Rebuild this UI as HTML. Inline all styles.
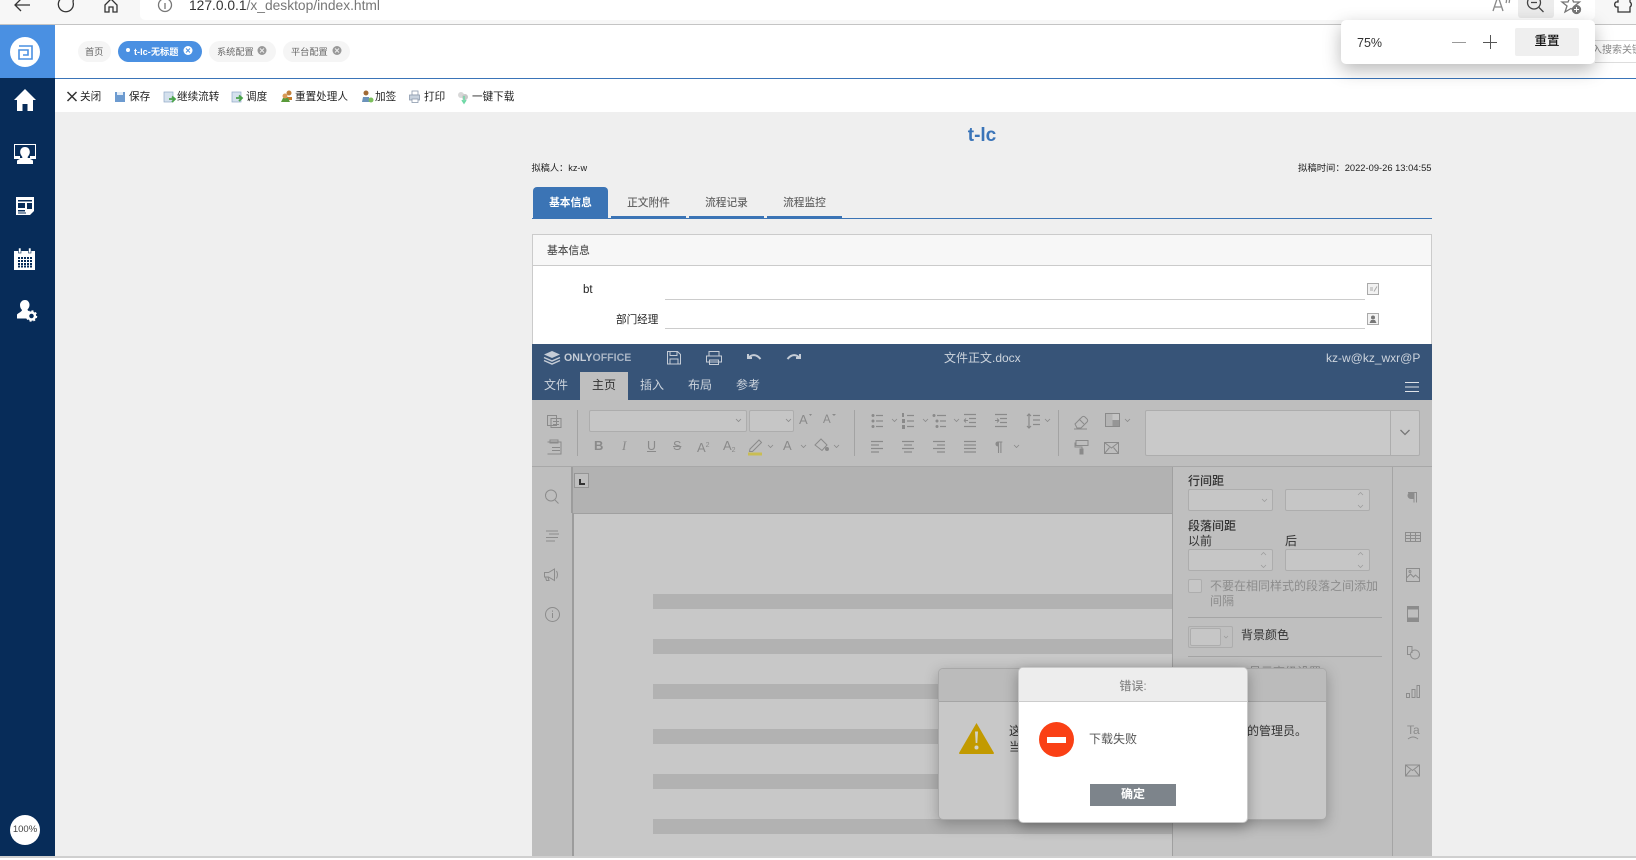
<!DOCTYPE html>
<html lang="zh"><head><meta charset="utf-8"><title>index</title>
<style>
html,body{margin:0;padding:0;width:1636px;height:860px;overflow:hidden;background:#fff}
body{position:relative;font-family:"Liberation Sans","Noto Sans CJK SC",sans-serif;color:#333}
div,span,svg{position:absolute;box-sizing:border-box}
.t{white-space:nowrap;line-height:16px;height:16px}
svg{left:0;top:0;overflow:visible}
.pill{height:21px;top:41px;border-radius:11px;background:#f5f5f5}
.tb{font-size:10.6px;color:#222;top:89px}
.ti{font-size:9.2px;color:#666;top:44px}
.ft{top:187px;height:31px;font-size:10.7px;line-height:33px;text-align:center;color:#666;font-weight:500}
.m{font-size:12px;color:#cdd4dd;top:377px}
.p{font-size:12px;color:#333}
.inp{background:#c6c6c6;border:1px solid #adadad;border-radius:2px}
.ic{font-size:13px;color:#8a8a8a;top:438px}
</style></head><body>

<!-- browser chrome -->
<div style="left:0;top:0;width:1636px;height:25px;background:#f7f7f7;border-bottom:1px solid #c4c4c4"></div>
<div style="left:140px;top:0;width:1455px;height:20px;background:#fff;border-radius:0 0 5px 5px"></div>
<div style="left:1518px;top:0;width:36px;height:18px;background:#ececec;border-radius:0 0 3px 3px"></div>
<div class="t" style="left:189px;top:-2px;font-size:13.8px;color:#777"><span style="position:static;color:#333">127.0.0.1</span>/x_desktop/index.html</div>
<svg width="1636" height="25" fill="none" stroke="#333" stroke-width="1.3">
<path d="M30 5H15M21 -1L15 5l6 6"/>
<path d="M73 2a7.5 7.5 0 1 1-3-4M70 -3l3.500 1-.5 4"/>
<path d="M105 5l6-6 6 6v7h-4V7h-4v5h-4z"/>
<circle cx="165" cy="5" r="6.500" stroke="#777"/><path d="M165 3v6" stroke="#777"/>
<circle cx="1534" cy="2.500" r="6.500" stroke="#444"/><path d="M1531 2.500h6M1539 7.500l4.500 4.500" stroke="#444"/>
<path d="M1571 -5l2.500 7h6l-5 4 2 6-5.500-3.500-6 3.500 2-6-5-4h6z" stroke="#777"/>
<circle cx="1576.500" cy="9.500" r="4" fill="#777" stroke="#777"/><path d="M1574 9.500h5M1576.500 7v5" stroke="#fff" stroke-width="1"/>
<path d="M1493 11l5-15 5 15M1495 7h6M1506 3q1-2 0-6M1509 3q1-3 0-7" stroke="#888"/>
<path d="M1618 -3v5h-2a3 3 0 0 0 0 5h2v5h12V7a3 3 0 0 0 0-5V-3z" stroke="#333"/>
</svg>

<!-- app header -->
<div style="left:55px;top:25px;width:1581px;height:53px;background:#fff"></div>
<div style="left:55px;top:78px;width:1581px;height:1px;background:#3a74b8"></div>
<div style="left:55px;top:79px;width:1581px;height:33px;background:#fff"></div>
<div style="left:55px;top:112px;width:1581px;height:745px;background:#efefef"></div>
<div style="left:0;top:856px;width:1636px;height:2px;background:#cfcfcf"></div>

<!-- sidebar -->
<div style="left:0;top:25px;width:55px;height:831px;background:#072c59"></div>
<div style="left:0;top:25px;width:55px;height:53px;background:#4a90e2"></div>
<div style="left:10px;top:37px;width:30px;height:30px;border-radius:50%;background:#fff"></div>
<div style="left:10px;top:815px;width:30px;height:30px;border-radius:50%;background:#fff"></div>
<div class="t" style="left:10px;width:30px;top:822px;text-align:center;font-size:9.500px;color:#444">100%</div>
<svg width="55" height="860">
<g fill="none" stroke="#4a90e2" stroke-width="1.600"><path d="M19 46h13v13H19V50h9v5h-5"/></g>
<path fill="#fff" d="M25 89L36 100h-3v11h-5.500v-7h-5v7H17v-11h-3z"/>
<rect x="14.500" y="144.500" width="21" height="14" fill="none" stroke="#fff"/>
<path fill="#fff" d="M25 147c3.200 0 4.800 2.300 4.800 5 0 2.300-1.300 3.800-2.300 5.200 0 1 3.800 2 5.500 3.300v3.500H17v-3.500c1.700-1.300 5.500-2.300 5.500-3.300-1-1.400-2.300-2.900-2.300-5.200 0-2.700 1.600-5 4.800-5z"/>
<rect x="15" y="156" width="5" height="2.500" fill="#fff"/><rect x="30" y="156" width="5" height="2.500" fill="#fff"/>
<path fill="#fff" d="M16 197h18v14l-4 4H16z"/>
<path fill="#072c59" d="M18 200h14v1.500H18zM18 203h7v5h-7zM27 203h5v6h-5zM18 210h7v1.500h-7zM18 212.500h8v1h-8z"/>
<path fill="#fff" d="M14 251h21v19H14z"/><rect x="18.500" y="248" width="2.500" height="5" fill="#fff" stroke="#072c59" stroke-width=".6"/><rect x="28.500" y="248" width="2.500" height="5" fill="#fff" stroke="#072c59" stroke-width=".6"/>
<path stroke="#072c59" stroke-width="2" stroke-dasharray="2 1" d="M18 258h14M18 261h14M18 264h14M18 266.500h14"/>
<path fill="#fff" d="M25 301c3 0 4.500 2.500 4.500 5 0 2-1 3.500-2 4.500 0 1 1 1.500 2.500 2-2 1-2.500 3-2 5v2H17v-4c2-2 5-3 5-4.500-1-1-2-2.500-2-5 0-2.500 2-5 5-5z" transform="translate(0 -1)"/>
<circle cx="31.500" cy="316" r="3.500" fill="none" stroke="#fff" stroke-width="2.500"/><circle cx="31.500" cy="316" r="5" fill="none" stroke="#fff" stroke-width="1.500" stroke-dasharray="2 1.900"/>
</svg>

<!-- tabs -->
<div class="pill" style="left:78px;width:33px"></div><div class="t ti" style="left:85px">首页</div>
<div class="pill" style="left:118px;width:84px;background:#4a90e2"></div>
<div style="left:126px;top:48px;width:4px;height:4px;border-radius:50%;background:#fff"></div>
<div class="t ti" style="left:134px;color:#fff;font-weight:700">t-lc-无标题</div>
<div class="pill" style="left:209px;width:67px"></div><div class="t ti" style="left:217px">系统配置</div>
<div class="pill" style="left:283px;width:67px"></div><div class="t ti" style="left:291px">平台配置</div>
<svg width="400" height="70" fill="none">
<circle cx="188" cy="50.500" r="4.500" fill="#fff"/><path d="M186 48.500l4 4m0-4l-4 4" stroke="#4a90e2"/>
<circle cx="262" cy="50.500" r="4.500" fill="#999"/><path d="M260 48.500l4 4m0-4l-4 4" stroke="#eee"/>
<circle cx="337" cy="50.500" r="4.500" fill="#999"/><path d="M335 48.500l4 4m0-4l-4 4" stroke="#eee"/>
</svg>
<div class="t" style="left:1592px;top:43px;font-size:10px;color:#888;width:44px;overflow:hidden">入搜索关键</div>
<div style="left:1595px;top:40px;width:41px;height:23px;border-top:1px solid #ddd;border-bottom:1px solid #ddd"></div>

<!-- toolbar -->
<div class="t tb" style="left:80px">关闭</div><div class="t tb" style="left:129px">保存</div><div class="t tb" style="left:177px">继续流转</div><div class="t tb" style="left:246px">调度</div><div class="t tb" style="left:295px">重置处理人</div><div class="t tb" style="left:375px">加签</div><div class="t tb" style="left:424px">打印</div><div class="t tb" style="left:472px">一键下载</div>
<svg width="540" height="112">
<path d="M67.500 92l9 9m0-9l-9 9" stroke="#333" stroke-width="1.500"/>
<rect x="115" y="92" width="10" height="10" fill="#6d9bd0"/><rect x="117" y="92" width="6" height="3" fill="#e2ecf7"/>
<rect x="164" y="92" width="9" height="10" fill="#d5e1ed" stroke="#8fa8c6" stroke-width=".7"/><path d="M169 99h5m-2-2.500l3 2.500-3 3" stroke="#4aa34a" stroke-width="1.800" fill="none"/>
<rect x="232" y="92" width="9" height="10" fill="#d5e1ed" stroke="#8fa8c6" stroke-width=".7"/><path d="M236 98h5m-2-2.500l3 2.500-3 3" stroke="#4aa34a" stroke-width="1.800" fill="none"/>
<circle cx="289" cy="93" r="2.500" fill="#c1813d"/><path d="M285 97h7v3h-7z" fill="#c47c2c"/><path d="M281 102l2-4h5l2 4z" fill="#5a9a3a"/><circle cx="285" cy="96" r="2.500" fill="#d99a55"/>
<circle cx="366" cy="93" r="2.500" fill="#a06a35"/><path d="M362 102l1-5h6l1 5z" fill="#6b92ba"/><circle cx="371" cy="100" r="2.500" fill="#7cbf5c"/>
<rect x="412" y="91" width="6" height="4" fill="#fff" stroke="#8c9aad" stroke-width=".8"/><rect x="409.500" y="95" width="10" height="5" fill="#c8d2de" stroke="#8c9aad" stroke-width=".8"/><rect x="412" y="99" width="6" height="3.500" fill="#fff" stroke="#8c9aad" stroke-width=".8"/>
<circle cx="461" cy="95" r="3" fill="#d8d8d8"/><circle cx="465" cy="97" r="3" fill="#c8c8c8"/><path d="M464 96v6m-2-2l2 3 2-3" stroke="#6fd8a5" stroke-width="1.500" fill="none"/>
</svg>

<!-- form header -->
<div class="t" style="left:882px;width:200px;top:125px;height:22px;line-height:22px;text-align:center;font-size:19px;font-weight:700;color:#3a74b8">t-lc</div>
<div class="t" style="left:531.500px;top:160px;font-size:9.200px;color:#222">拟稿人：kz-w</div>
<div class="t" style="left:1298px;top:160px;font-size:9.350px;color:#222">拟稿时间：2022-09-26 13:04:55</div>

<div class="ft" style="left:533px;width:75px;background:#3b74b5;color:#fff;border-radius:4px 4px 0 0;font-weight:700">基本信息</div>
<div class="ft" style="left:611px;width:75px;border-bottom:2px solid #3b74b5">正文附件</div>
<div class="ft" style="left:689px;width:75px;border-bottom:2px solid #3b74b5">流程记录</div>
<div class="ft" style="left:767px;width:75px;border-bottom:2px solid #3b74b5">流程监控</div>
<div style="left:532px;top:218px;width:900px;height:1px;background:#3b74b5"></div>

<!-- panel -->
<div style="left:532px;top:234px;width:900px;height:111px;background:#fff;border:1px solid #cbcbcb"></div>
<div style="left:533px;top:235px;width:898px;height:31px;background:#f7f7f7;border-bottom:1px solid #cbcbcb"></div>
<div class="t" style="left:547px;top:243px;font-size:10.700px;color:#555;font-weight:500">基本信息</div>
<div class="t" style="left:583px;top:282px;font-size:11.500px;color:#222">bt</div>
<div class="t" style="left:616px;top:311.500px;font-size:10.600px;color:#222">部门经理</div>
<div style="left:665px;top:299px;width:700px;height:1px;background:#ccc"></div>
<div style="left:665px;top:328px;width:700px;height:1px;background:#ccc"></div>
<svg width="1400" height="340">
<rect x="1367.500" y="283.500" width="11" height="11" fill="#f2f2f2" stroke="#aaa"/><path d="M1370 288h3m-3 2h3m1 1.500l3-5" stroke="#aaa" fill="none"/>
<rect x="1367.500" y="313.500" width="11" height="11" fill="#f2f2f2" stroke="#aaa"/><circle cx="1373" cy="317.500" r="2" fill="#777"/><path d="M1369.500 323l1.500-3h4l1.500 3z" fill="#777"/>
</svg>

<!-- onlyoffice -->
<div style="left:532px;top:344px;width:900px;height:56px;background:#375478"></div>
<div class="t" style="left:564px;top:350px;font-size:10.600px;font-weight:700;color:#c5ccd6">ONLY<span style="position:static;color:#a8b4c4">OFFICE</span></div>
<div class="t" style="left:944px;top:350px;font-size:12px;color:#cdd4dd">文件正文.docx</div>
<div class="t" style="left:1326px;top:350px;font-size:12px;color:#cdd4dd">kz-w@kz_wxr@P</div>
<div style="left:580px;top:372px;width:48px;height:28px;background:#bfbfbf"></div>
<div class="t m" style="left:544px">文件</div><div class="t m" style="left:592px;color:#333">主页</div><div class="t m" style="left:640px">插入</div><div class="t m" style="left:688px">布局</div><div class="t m" style="left:736px">参考</div>
<svg width="1432" height="400" fill="none" stroke="#c5ccd6">
<path d="M552 351l8 3.500-8 3.500-8-3.500z" fill="#c5ccd6" stroke="none"/><path d="M544 357.500l8 3.500 8-3.500M544 360.500l8 3.500 8-3.500" stroke-width="1.500"/>
<path d="M667.500 351.500h10l3 3v9.500h-13zM670 351.500v4h7v-4M670 364v-5h8v5"/>
<path d="M709 356v-4.500h10v4.500M706.500 356h15v6h-15zM709.500 360h9v4.500h-9z"/>
<path d="M748 354v4h4M748.500 358c3-4 8-4 12 1" stroke-width="2"/>
<path d="M800 354v4h-4M799.500 358c-3-4-8-4-12 1" stroke-width="2"/>
<path d="M1405 382.500h14M1405 387h14M1405 391.500h14" stroke="#dfe3e8"/>
</svg>

<!-- doc toolbar -->
<div style="left:532px;top:400px;width:900px;height:66px;background:#bebebe"></div>
<div style="left:532px;top:466px;width:900px;height:1px;background:#a8a8a8"></div>
<div class="inp" style="left:589px;top:410px;width:158px;height:22px"></div>
<div class="inp" style="left:749px;top:410px;width:45px;height:22px"></div>
<div class="inp" style="left:1145px;top:410px;width:275px;height:46px;background:#c9c9c9"></div>
<div style="left:1390px;top:410px;width:1px;height:46px;background:#adadad"></div>
<div class="t ic" style="left:594px;font-weight:700">B</div>
<div class="t ic" style="left:622px;font-style:italic;font-family:'Liberation Serif',serif">I</div>
<div class="t ic" style="left:647px;font-size:12.500px;text-decoration:underline">U</div>
<div class="t ic" style="left:673px;font-size:12.500px;text-decoration:line-through">S</div>
<div class="t ic" style="left:697px">A<span style="position:static;font-size:7px;vertical-align:5px">2</span></div>
<div class="t ic" style="left:723px">A<span style="position:static;font-size:7px;vertical-align:-2px">2</span></div>
<div class="t ic" style="left:783px">A</div>
<div class="t" style="left:799px;top:412px;font-size:13px;color:#8a8a8a">A</div>
<div class="t" style="left:823px;top:412px;font-size:11.500px;color:#8a8a8a">A</div>
<div class="t ic" style="left:995px;font-size:14px;font-weight:700">¶</div>
<svg width="1432" height="470" fill="none" stroke="#8a8a8a">
<path d="M547.500 415.500h9v10h-9zM551 418.500h10v9h-10zM553 421.500h6M553 424.500h6"/>
<path d="M547.500 442h13.500v12h-13.500M550 440h8v3h-8zM552 447.500h8M552 450.500h8" />
<path d="M577.500 410v46M854.500 410v46M1058.500 410v46" stroke="#a3a3a3"/>
<g stroke-width=".8"><path d="M736 419l2.500 2.500 2.500-2.500M786 419l2.500 2.500 2.500-2.500M892 419l2.500 2.500 2.500-2.500M923 419l2.500 2.500 2.500-2.500M954 419l2.500 2.500 2.500-2.500M1045 419l2.500 2.500 2.500-2.500M1125 419l2.500 2.500 2.500-2.500M768 445l2.500 2.500 2.500-2.500M801 445l2.500 2.500 2.500-2.500M834 445l2.500 2.500 2.500-2.500M1014 445l2.500 2.500 2.500-2.500"/></g>
<path d="M809 414l1.500 2 1.500-2zM832 414l2 2 2-2z" fill="#8a8a8a" stroke="none"/>
<!-- list icons -->
<g stroke-width="1.200">
<path d="M876 415.500h7M876 421h7M876 426.500h7M907 415.500h7M907 421h7M907 426.500h7M937 415.500h9M940 421h6M940 426.500h6"/>
<path d="M964 414.500h12M969 418.500h7M969 422.500h7M964 426.500h12M995 414.500h12M1000 418.500h7M1000 422.500h7M995 426.500h12"/>
<path d="M1033 415.500h7M1033 420h7M1033 424.500h7M1029 414v14M1027 416l2-2 2 2M1027 426l2 2 2-2"/>
<path d="M871 441.500h12M871 445h8M871 448.500h12M871 452h8M902 441.500h12M904 445h8M902 448.500h12M904 452h8M933 441.500h12M937 445h8M933 448.500h12M937 452h8M964 441.500h12M964 445h12M964 448.500h12M964 452h12"/>
</g>
<g fill="#8a8a8a" stroke="none"><circle cx="873" cy="415.500" r="1.500"/><circle cx="873" cy="421" r="1.500"/><circle cx="873" cy="426.500" r="1.500"/><circle cx="934" cy="415.500" r="1.500"/><circle cx="937" cy="421" r="1.500"/><circle cx="937" cy="426.500" r="1.500"/>
<rect x="902" y="413" width="2" height="4"/><rect x="902" y="419" width="3" height="4"/><rect x="902" y="425" width="3" height="4"/></g>
<path d="M968 420.500h-4m0 0l2-2m-2 2l2 2M995 420.500h4m0 0l-2-2m2 2l-2 2"/>
<!-- eraser -->
<path d="M1075 424l7-7a2 2 0 0 1 3 0l2 2a2 2 0 0 1 0 3l-6 6h-4zM1079 419l5 5M1074 429h13"/>
<!-- shading -->
<rect x="1105.500" y="413.500" width="14" height="13" fill="#b4b4b4"/><rect x="1112.500" y="414" width="6.500" height="6" fill="#c4c4c4" stroke="none"/><rect x="1112.500" y="420" width="6.500" height="6" fill="#969696" stroke="none"/>
<!-- roller -->
<path d="M1076 440.500h12v5h-12zM1076 443h-1v4h7v2"/><rect x="1080" y="449" width="3" height="5" fill="#8a8a8a"/>
<!-- mail -->
<path d="M1104.500 442.500h14v11h-14zM1104.500 442.500l7 5.500 7-5.500M1104.500 453.500l5-6M1118.500 453.500l-5-6"/>
<!-- highlight -->
<path d="M750 449l9-9 2.500 2.500-9 9h-3z"/><rect x="748" y="452.500" width="14" height="3" fill="#c9bd54" stroke="none"/>
<!-- fill -->
<path d="M815 445l6-6 6 6-5 5.500z"/><circle cx="827" cy="449" r="1.500" fill="#8a8a8a"/>
<path d="M1400.500 430l4.500 4.500 4.500-4.500" stroke="#777" stroke-width="1.300"/>
</svg>

<!-- left bar -->
<div style="left:532px;top:467px;width:40px;height:389px;background:#bebebe"></div>
<!-- rulers & doc -->
<div style="left:572px;top:467px;width:601px;height:46px;background:#b2b2b2"></div>
<div style="left:572px;top:513px;width:601px;height:1px;background:#a0a0a0"></div>
<div style="left:572px;top:514px;width:600px;height:342px;background:#c8c8c8"></div>
<div style="left:571px;top:467px;width:1.500px;height:46px;background:#9c9c9c"></div>
<div style="left:572px;top:513px;width:1.500px;height:343px;background:#9c9c9c"></div>
<div style="left:574px;top:473px;width:15px;height:15px;background:#bebebe;border:1px solid #959595"></div>
<div style="left:579px;top:479px;width:6px;height:6px;border-left:2px solid #333;border-bottom:2px solid #333"></div>
<div style="left:653px;top:594px;width:519px;height:15px;background:#b2b2b2"></div>
<div style="left:653px;top:639px;width:519px;height:15px;background:#b2b2b2"></div>
<div style="left:653px;top:684px;width:519px;height:15px;background:#b2b2b2"></div>
<div style="left:653px;top:729px;width:519px;height:15px;background:#b2b2b2"></div>
<div style="left:653px;top:774px;width:519px;height:15px;background:#b2b2b2"></div>
<div style="left:653px;top:819px;width:519px;height:15px;background:#b2b2b2"></div>
<svg width="600" height="860" fill="none" stroke="#8c8c8c">
<circle cx="551" cy="495.500" r="5.500"/><path d="M555 500l3.500 3.500"/>
<path d="M546 531h12M549 534h10M546 537.500h12M546 541h9"/>
<path d="M544.500 572.500h4l6-3.500v11.500l-6-3.500h-4zM545.500 577l1 3.500h2.500l-1-3.500M556.500 571q2 3.500 0 7.500"/>
<circle cx="552.500" cy="614.500" r="7"/><path d="M552.500 613v5M552.500 610.500v1.200"/>
</svg>

<!-- right panel -->
<div style="left:1172px;top:467px;width:260px;height:389px;background:#bfbfbf;border-left:1px solid #a0a0a0"></div>
<div style="left:1392px;top:467px;width:1px;height:389px;background:#a5a5a5"></div>
<div class="t p" style="left:1188px;top:473px;font-weight:500">行间距</div>
<div class="inp" style="left:1188px;top:489px;width:85px;height:22px"></div>
<div class="inp" style="left:1285px;top:489px;width:85px;height:22px"></div>
<div class="t p" style="left:1188px;top:518px;font-weight:500">段落间距</div>
<div class="t p" style="left:1188px;top:533px">以前</div>
<div class="t p" style="left:1285px;top:533px">后</div>
<div class="inp" style="left:1188px;top:549px;width:85px;height:22px"></div>
<div class="inp" style="left:1285px;top:549px;width:85px;height:22px"></div>
<div class="inp" style="left:1188px;top:579px;width:14px;height:14px"></div>
<div class="t" style="left:1210px;top:578px;font-size:12px;color:#8c8c8c">不要在相同样式的段落之间添加</div>
<div class="t" style="left:1210px;top:593px;font-size:12px;color:#8c8c8c">间隔</div>
<div style="left:1188px;top:617px;width:194px;height:1px;background:#a5a5a5"></div>
<div class="inp" style="left:1188px;top:626px;width:45px;height:22px;background:#bfbfbf"></div>
<div class="inp" style="left:1190px;top:628px;width:31px;height:18px"></div>
<div class="t p" style="left:1241px;top:627px">背景颜色</div>
<div style="left:1188px;top:656px;width:194px;height:1px;background:#a5a5a5"></div>
<div class="t" style="left:1249px;top:664px;font-size:12px;color:#888">显示高级设置</div>
<svg width="1432" height="860" fill="none" stroke="#8c8c8c">
<g stroke-width=".7" stroke="#999"><path d="M1262 499l2.500 2.500 2.500-2.500M1358 505l2.500 2.500 2.500-2.500M1358 495l2.500-2.500 2.500 2.500M1261 565l2.500 2.500 2.500-2.500M1261 555l2.500-2.500 2.500 2.500M1358 565l2.500 2.500 2.500-2.500M1358 555l2.500-2.500 2.500 2.500M1224 636l2 2 2-2"/></g>
<path d="M1408 492.500h9M1414 492.500v10M1416.500 492.500v10" />
<path d="M1411 492.500a3 3 0 0 0 0 6h2v-6z" fill="#8c8c8c"/>
<path d="M1405.500 532.500h15v9h-15zM1405.500 535.500h15M1405.500 538.500h15M1410.500 532.500v9M1415.500 532.500v9"/>
<path d="M1406.500 568.500h13v13h-13zM1406.500 578l4-4 3 3 2-2 4 3.500"/><circle cx="1410" cy="571.500" r="1"/>
<path d="M1407.500 606.500h11v15h-11z"/><rect x="1408" y="607" width="10" height="2" fill="#8c8c8c"/><rect x="1408" y="618" width="10" height="3" fill="#8c8c8c"/>
<path d="M1412 653v-6.500h-4.500v8h3"/><circle cx="1415" cy="654.500" r="4.500"/>
<path d="M1406.500 693.500h3v4h-3zM1412 689.500h3v8h-3zM1417 685.500h2.500v12h-2.500z"/>
<path d="M1408 739q5-4 10 0"/>
<path d="M1405.500 765h14v11h-14zM1405.500 765l7 5.500 7-5.500M1405.500 776l5-6M1419.500 776l-5-6"/>
</svg>
<div class="t" style="left:1407px;top:722px;font-size:12px;color:#8c8c8c">Ta</div>

<!-- warning dialog -->
<div style="left:938px;top:668px;width:389px;height:152px;background:#c8c8c8;border:1px solid #a8a8a8;border-radius:5px;box-shadow:0 4px 14px rgba(0,0,0,.25)"></div>
<div style="left:939px;top:669px;width:387px;height:33px;background:#bbb;border-bottom:1px solid #a5a5a5;border-radius:4px 4px 0 0"></div>
<svg width="1000" height="760"><path d="M976.500 723L994 753a1 1 0 0 1-1 1H960a1 1 0 0 1-1-1z" fill="#c29a00"/><path d="M975 731.500h3l-.7 11.500h-1.600z" fill="#d2d2c8"/><circle cx="976.500" cy="747.500" r="2" fill="#d2d2c8"/></svg>
<div class="t" style="left:1009px;top:723px;font-size:12px;color:#333">这</div>
<div class="t" style="left:1009px;top:739px;font-size:12px;color:#333">当</div>
<div class="t" style="left:1247px;top:723px;font-size:12px;color:#333">的管理员。</div>

<!-- error dialog -->
<div style="left:1018px;top:667px;width:230px;height:156px;background:#fff;border:1px solid #c9c9c9;border-radius:5px;box-shadow:0 4px 14px rgba(0,0,0,.3)"></div>
<div style="left:1019px;top:668px;width:228px;height:34px;background:#ededed;border-bottom:1px solid #ccc;border-radius:4px 4px 0 0"></div>
<div class="t" style="left:1019px;width:228px;top:678px;text-align:center;font-size:12px;color:#888;font-weight:500">错误:</div>
<div style="left:1038.500px;top:721.500px;width:35px;height:35px;border-radius:50%;background:#fa4015"></div>
<div style="left:1047px;top:737px;width:19px;height:6px;background:#fff"></div>
<div class="t" style="left:1089px;top:730.500px;font-size:12px;color:#555">下载失败</div>
<div class="t" style="left:1090px;top:784px;width:86px;height:22px;line-height:21px;background:#7d848b;color:#fff;font-size:12px;font-weight:700;text-align:center">确定</div>

<!-- zoom popup -->
<div style="left:1341px;top:20px;width:254px;height:44px;background:#fff;border-radius:5px;box-shadow:0 6px 18px rgba(0,0,0,.28)"></div>
<div class="t" style="left:1357px;top:35px;font-size:12.500px;color:#333">75%</div>
<div style="left:1452px;top:41.500px;width:14px;height:1.500px;background:#999"></div>
<div style="left:1483px;top:41.500px;width:14px;height:1.200px;background:#555"></div>
<div style="left:1489.500px;top:35px;width:1.200px;height:14px;background:#555"></div>
<div class="t" style="left:1515px;top:28px;width:64px;height:28px;line-height:27px;background:#efefef;border-radius:2px;text-align:center;font-size:12.500px;color:#111;font-weight:500">重置</div>

</body></html>
